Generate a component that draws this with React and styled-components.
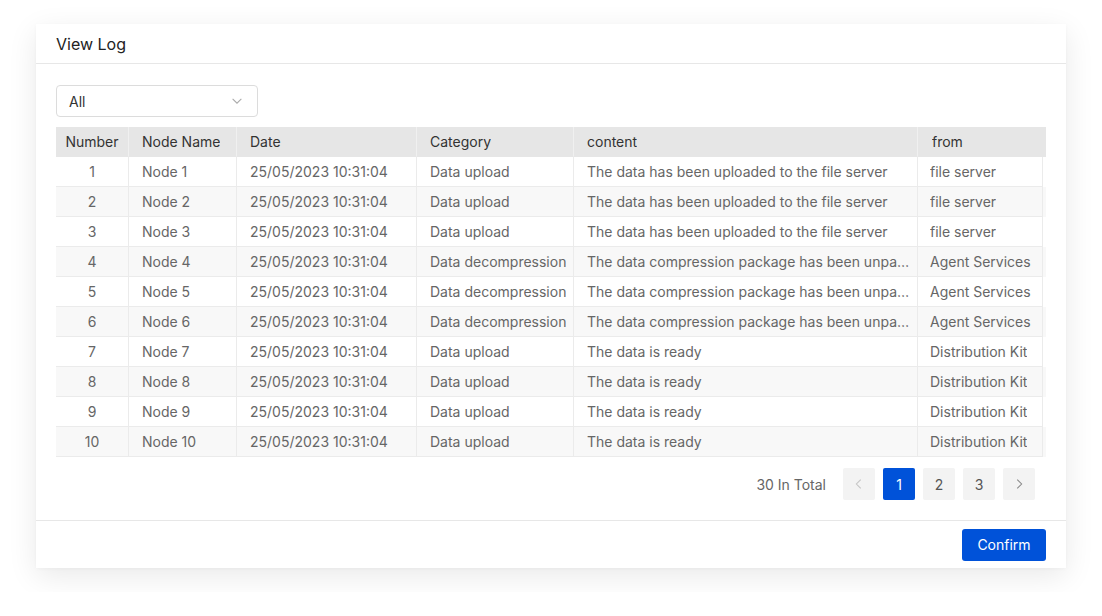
import styled, { createGlobalStyle } from "styled-components";

const GlobalStyle = createGlobalStyle`
  html, body {
    margin: 0;
    padding: 0;
    background: #fff;
    font-family: Inter, "Liberation Sans", Arial, sans-serif;
  }
`;

const columns = [
  { key: "no", title: "Number", width: 73, center: true },
  { key: "name", title: "Node Name", width: 108 },
  { key: "date", title: "Date", width: 180 },
  { key: "cat", title: "Category", width: 157 },
  { key: "content", title: "content", width: 344 },
  { key: "from", title: "from", width: 128 },
];

const UPLOAD = "The data has been uploaded to the file server";
const UNPACK = "The data compression package has been unpacked successfully";
const READY = "The data is ready";

const rows = Array.from({ length: 10 }, (_, i) => {
  const n = i + 1;
  let cat = "Data upload";
  let content = READY;
  let from = "Distribution Kit";
  if (n <= 3) {
    content = UPLOAD;
    from = "file server";
  } else if (n <= 6) {
    cat = "Data decompression";
    content = UNPACK;
    from = "Agent Services";
  }
  return {
    no: n,
    name: `Node ${n}`,
    date: "25/05/2023 10:31:04",
    cat,
    content,
    from,
  };
});

const Page = styled.div`
  padding: 24px 36px;
`;

const Modal = styled.div`
  width: 1030px;
  background: #fff;
  box-shadow: 0 8px 28px rgba(0, 0, 0, 0.09), 0 1px 4px rgba(0, 0, 0, 0.03);
`;

const Header = styled.div`
  height: 39px;
  display: flex;
  align-items: center;
  padding: 0 20px;
  border-bottom: 1px solid #e7e7e7;
  font-size: 16px;
  color: #222;
`;

const Body = styled.div`
  padding: 21px 20px 20px;
  display: flex;
  flex-direction: column;
`;

const Select = styled.div`
  width: 200px;
  height: 30px;
  box-sizing: content-box;
  border: 1px solid #dcdcdc;
  border-radius: 4px;
  display: flex;
  align-items: center;
  justify-content: space-between;
  font-size: 14px;
  color: #333;

  span {
    padding-left: 12px;
  }

  svg {
    margin-right: 13px;
  }
`;

const Table = styled.div`
  margin-top: 10px;
  width: 990px;
  font-size: 14px;
`;

const Row = styled.div`
  display: grid;
  grid-template-columns: ${(p) => p.$cols};
  height: 30px;
  background: ${(p) => (p.$head ? "#e6e6e6" : p.$striped ? "#f8f8f8" : "#fff")};
  color: ${(p) => (p.$head ? "#333" : "#666")};
`;

const Cell = styled.div`
  display: flex;
  align-items: center;
  justify-content: ${(p) => (p.$center ? "center" : "flex-start")};
  padding: 0 ${(p) => (p.$center ? 0 : 4)}px 0 ${(p) => (p.$center ? 0 : 13)}px;
  min-width: 0;
  box-sizing: border-box;
  border-right: 1px solid ${(p) => (p.$head ? "#f0f0f0" : "#ebebeb")};
  border-bottom: 1px solid ${(p) => (p.$head ? "transparent" : "#ebebeb")};
  white-space: nowrap;
  overflow: hidden;

  &:last-child {
    border-right: ${(p) => (p.$head ? "none" : "1px solid #ebebeb")};
    padding-left: ${(p) => (p.$head ? 14 : 12)}px;
  }

  span {
    overflow: hidden;
    text-overflow: ellipsis;
    white-space: nowrap;
  }
`;

const Pager = styled.div`
  margin-top: 11px;
  display: flex;
  align-items: center;
  justify-content: flex-end;
  gap: 8px;
  padding-right: 11px;
`;

const Total = styled.span`
  font-size: 14px;
  color: #666;
  margin-right: 9px;
`;

const PageBtn = styled.div`
  width: 32px;
  height: 32px;
  border-radius: 2px;
  display: flex;
  align-items: center;
  justify-content: center;
  font-size: 14px;
  background: ${(p) => (p.$active ? "#0052d9" : "#f3f3f3")};
  color: ${(p) => (p.$active ? "#fff" : "#555")};
`;

const Footer = styled.div`
  border-top: 1px solid #e7e7e7;
  height: 47px;
  display: flex;
  align-items: center;
  justify-content: flex-end;
  padding: 0 20px;
`;

const Button = styled.button`
  width: 84px;
  height: 32px;
  border: none;
  border-radius: 3px;
  background: #0052d9;
  color: #fff;
  font-family: inherit;
  font-size: 14px;
`;

const Chevron = ({ dir = "down", color = "#aaa" }) => {
  const d = {
    down: "M3 5.5 L8 10.5 L13 5.5",
    left: "M10 3 L5 8 L10 13",
    right: "M6 3 L11 8 L6 13",
  }[dir];
  return (
    <svg width="14" height="14" viewBox="0 0 16 16" fill="none">
      <path d={d} stroke={color} strokeWidth="1.2" />
    </svg>
  );
};

const headCols = columns.map((c) => `${c.width}px`).join(" ");
const bodyCols = columns
  .map((c, i) => `${i === columns.length - 1 ? c.width - 3 : c.width}px`)
  .join(" ");

export default function App() {
  return (
    <Page>
      <GlobalStyle />
      <Modal>
        <Header>View Log</Header>
        <Body>
          <Select>
            <span>All</span>
            <Chevron />
          </Select>
          <Table>
            <Row $head $cols={headCols}>
              {columns.map((c) => (
                <Cell $head key={c.key} $center={c.center}>
                  <span>{c.title}</span>
                </Cell>
              ))}
            </Row>
            {rows.map((r, i) => (
              <Row key={r.no} $cols={bodyCols} $striped={i % 2 === 1}>
                {columns.map((c) => (
                  <Cell key={c.key} $center={c.center}>
                    <span>{r[c.key]}</span>
                  </Cell>
                ))}
              </Row>
            ))}
          </Table>
          <Pager>
            <Total>30 In Total</Total>
            <PageBtn>
              <Chevron dir="left" color="#c4c4c4" />
            </PageBtn>
            <PageBtn $active>1</PageBtn>
            <PageBtn>2</PageBtn>
            <PageBtn>3</PageBtn>
            <PageBtn>
              <Chevron dir="right" color="#888" />
            </PageBtn>
          </Pager>
        </Body>
        <Footer>
          <Button>Confirm</Button>
        </Footer>
      </Modal>
    </Page>
  );
}
